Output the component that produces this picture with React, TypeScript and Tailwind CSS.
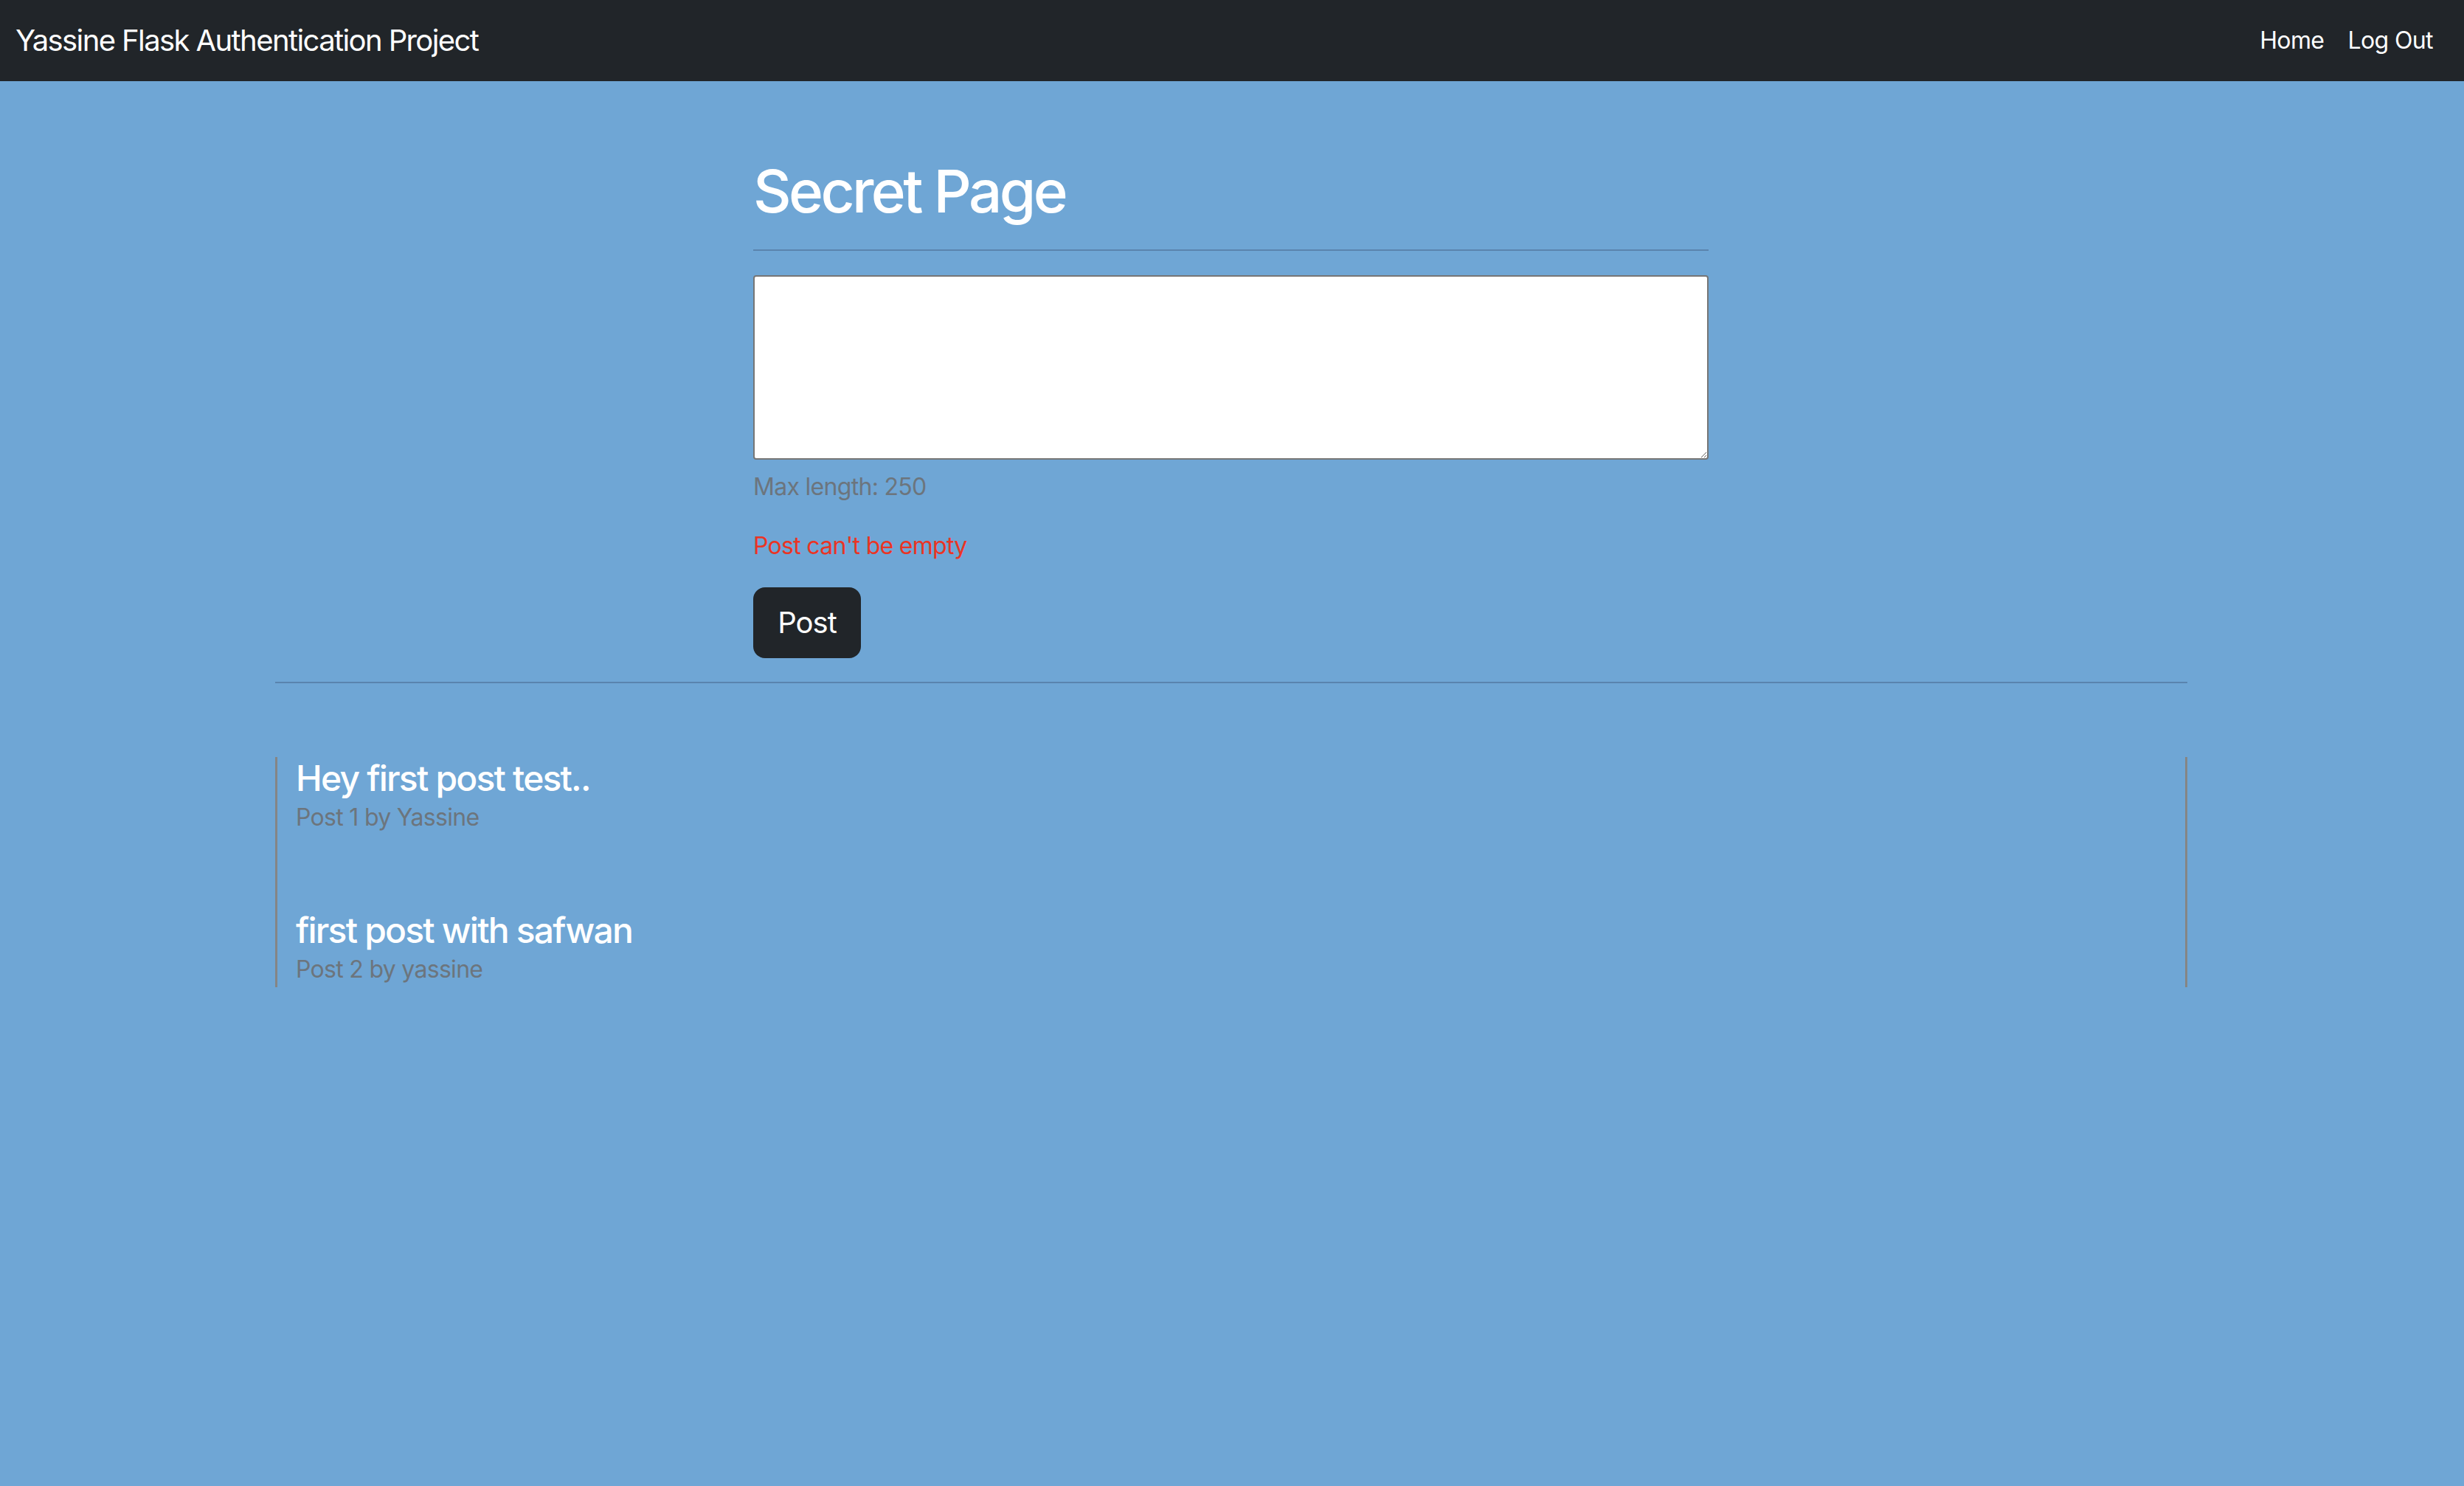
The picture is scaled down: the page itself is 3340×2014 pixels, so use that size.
const posts = [
  { id: 1, title: 'Hey first post test..', author: 'Yassine' },
  { id: 2, title: 'first post with safwan', author: 'yassine' },
]

export default function App() {
  return (
    <div className="min-h-[2014px] bg-[#6fa6d5] font-['Inter',sans-serif] text-white">
      <nav className="h-[110px] bg-[#212529] flex items-center justify-between pl-[21px] pr-[26px]">
        <a className="text-[40px] leading-[60px] tracking-[-1.6px]">
          Yassine Flask Authentication Project
        </a>
        <ul className="flex text-[32px] leading-[48px] tracking-[-0.6px]">
          <li className="px-4">Home</li>
          <li className="px-4">Log Out</li>
        </ul>
      </nav>

      <main className="flex flex-col items-center">
        <div className="w-[1295px] ml-[-3px] pt-[101px]">
          <h1 className="text-[80px] leading-[96px] font-medium tracking-[-3.6px]">
            Secret Page
          </h1>
          <hr className="mt-[31px] border-t-2 border-[#5a84ae]" />
          <form className="mt-[33px] flex flex-col items-start">
            <textarea className="w-full h-[250px] bg-white border-2 border-[#767676] rounded-[4px] resize-y" />
            <small className="mt-[13px] text-[32px] leading-[48px] tracking-[-0.7px] text-[#6c757d]">
              Max length: 250
            </small>
            <p className="mt-[32px] text-[32px] leading-[48px] tracking-[-0.7px] text-[#ea3424]">
              Post can't be empty
            </p>
            <button
              type="button"
              className="mt-[32px] h-[96px] w-[146px] rounded-[16px] bg-[#212529] text-[40px] leading-[60px] tracking-[-1px] text-white"
            >
              Post
            </button>
          </form>
        </div>
        <hr className="w-[2592px] ml-[-2px] mt-[32px] border-t-2 border-[#5a84ae]" />
        <div className="w-[2592px] ml-[-2px] mt-[100px] border-x-[3px] border-[#858585] pl-[25px] flex flex-col gap-[100px]">
          {posts.map((post) => (
            <div key={post.id}>
              <h4 className="text-[48px] leading-[58px] font-medium tracking-[-1.8px]">
                {post.title}
              </h4>
              <p className="text-[32px] leading-[48px] tracking-[-0.7px] text-[#6c757d]">
                Post {post.id} by {post.author}
              </p>
            </div>
          ))}
        </div>
      </main>
    </div>
  )
}
